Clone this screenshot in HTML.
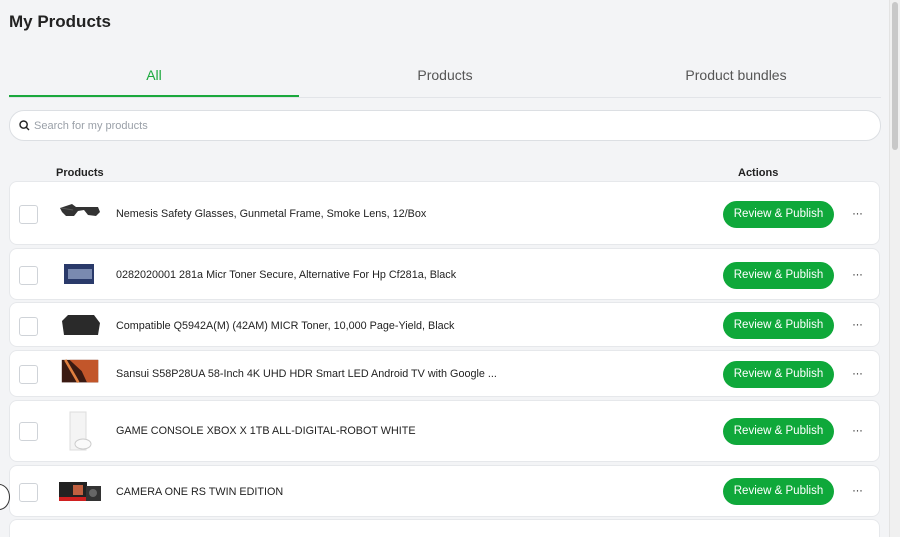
<!DOCTYPE html>
<html style="overflow:hidden;height:537px"><head><style>
body{margin:0;width:900px;height:537px;overflow:hidden;background:#f3f4f6;font-family:"Liberation Sans",sans-serif;color:#1f2430;position:relative}
h1{position:absolute;left:9px;top:12px;margin:0;font-size:17px;font-weight:bold;color:#222}
.tabs{position:absolute;left:9px;top:60px;width:872px;height:37px;border-bottom:1px solid #e2e4e8}
.tab{position:absolute;top:7px;width:290px;text-align:center;font-size:14px;color:#555}
.ul{position:absolute;left:0;top:35px;width:290px;height:2px;background:#1aa83c}
.search{position:absolute;left:9px;top:110px;width:870px;height:29px;border:1px solid #dcdfe3;border-radius:15px;background:#fff}
.search span{position:absolute;left:24px;top:9px;font-size:11px;color:#9aa0a8}
.hdr{position:absolute;top:167px;font-size:11px;font-weight:bold;color:#222}
.row{position:absolute;left:9px;width:871px;background:#fff;border:1px solid #e6e8eb;border-radius:8px;box-sizing:border-box}
.cb{position:absolute;left:9px;width:17px;height:17px;border:1px solid #cfd3d8;border-radius:3px;background:#fff}
.img{position:absolute;left:48px;width:44px;height:26px}
.t{position:absolute;left:106px;font-size:10.8px;color:#222;white-space:nowrap}
.btn{position:absolute;left:713px;width:111px;height:27px;border-radius:14px;background:#0fa83a;color:#fff;font-size:11.5px;text-align:center;line-height:27px}
.dots{position:absolute;left:842px;font-size:12px;color:#333;letter-spacing:-0.5px}
.sb{position:absolute;left:889px;top:0;width:11px;height:537px;background:#f0f0f0;border-left:1px solid #e3e3e3}
.sb div{position:absolute;left:2px;top:2px;width:6px;height:148px;background:#c8c8c8;border-radius:3px}
</style></head><body>
<h1>My Products</h1>
<div class="tabs">
<div class="tab" style="left:0;color:#1aa83c">All</div>
<div class="tab" style="left:291px">Products</div>
<div class="tab" style="left:582px">Product bundles</div>
<div class="ul"></div>
</div>
<div class="search">
<svg style="position:absolute;left:9px;top:9px" width="11" height="11" viewBox="0 0 11 11"><circle cx="4.6" cy="4.6" r="3.6" fill="none" stroke="#222" stroke-width="1.4"/><path d="M7.3 7.3L10 10" stroke="#222" stroke-width="1.4"/></svg>
<span>Search for my products</span></div>
<div class="hdr" style="left:56px">Products</div>
<div class="hdr" style="left:738px">Actions</div>

<div class="row" style="top:181px;height:64px"><div class="cb" style="top:23px"></div>
<svg class="img" style="top:20px" viewBox="0 0 44 26"><path d="M2 6L14 2L18 5L40 5L42 10L38 14L30 13L26 8L20 9L16 14L8 14L4 10Z" fill="#333"/><path d="M3 6L15 8" stroke="#555"/></svg>
<div class="t" style="top:26px">Nemesis Safety Glasses, Gunmetal Frame, Smoke Lens, 12/Box</div>
<div class="btn" style="top:19px">Review &amp; Publish</div><div class="dots" style="top:24px">···</div></div>

<div class="row" style="top:248px;height:52px"><div class="cb" style="top:17px"></div>
<svg class="img" style="top:12px" viewBox="0 0 44 26"><rect x="6" y="3" width="30" height="20" fill="#2a3a6a"/><rect x="10" y="8" width="24" height="10" fill="#7a8ab0"/></svg>
<div class="t" style="top:20px">0282020001 281a Micr Toner Secure, Alternative For Hp Cf281a, Black</div>
<div class="btn" style="top:13px">Review &amp; Publish</div><div class="dots" style="top:18px">···</div></div>

<div class="row" style="top:302px;height:45px"><div class="cb" style="top:14px"></div>
<svg class="img" style="top:10px" viewBox="0 0 44 26"><path d="M4 8L10 2L36 2L42 10L40 22L6 22Z" fill="#2a2a2a"/></svg>
<div class="t" style="top:17px">Compatible Q5942A(M) (42AM) MICR Toner, 10,000 Page-Yield, Black</div>
<div class="btn" style="top:9px">Review &amp; Publish</div><div class="dots" style="top:14px">···</div></div>

<div class="row" style="top:350px;height:47px"><div class="cb" style="top:14px"></div>
<svg class="img" style="top:8px" viewBox="0 0 44 30"><rect x="1" y="1" width="42" height="26" fill="#3a1a12"/><path d="M10 1L24 14L30 27L43 27L43 1Z" fill="#c2562a"/><path d="M5 1L16 20L20 27" stroke="#e08040" stroke-width="3" fill="none"/></svg>
<div class="t" style="top:17px">Sansui S58P28UA 58-Inch 4K UHD HDR Smart LED Android TV with Google ...</div>
<div class="btn" style="top:10px">Review &amp; Publish</div><div class="dots" style="top:15px">···</div></div>

<div class="row" style="top:400px;height:62px"><div class="cb" style="top:21px"></div>
<svg class="img" style="top:10px;height:40px" viewBox="0 0 44 40"><rect x="12" y="1" width="16" height="38" fill="#f4f4f4" stroke="#ddd"/><ellipse cx="25" cy="33" rx="8" ry="5" fill="#fafafa" stroke="#ccc"/></svg>
<div class="t" style="top:24px">GAME CONSOLE XBOX X 1TB ALL-DIGITAL-ROBOT WHITE</div>
<div class="btn" style="top:17px">Review &amp; Publish</div><div class="dots" style="top:22px">···</div></div>

<div class="row" style="top:465px;height:52px"><div class="cb" style="top:17px"></div>
<svg class="img" style="top:12px" viewBox="0 0 44 26"><rect x="1" y="4" width="28" height="19" fill="#222"/><rect x="1" y="19" width="28" height="4" fill="#d02020"/><rect x="28" y="8" width="15" height="15" fill="#333"/><circle cx="35" cy="15" r="4" fill="#666"/><rect x="15" y="7" width="10" height="10" fill="#c06040"/></svg>
<div class="t" style="top:20px">CAMERA ONE RS TWIN EDITION</div>
<div class="btn" style="top:12px">Review &amp; Publish</div><div class="dots" style="top:17px">···</div></div>

<div class="row" style="top:519px;height:18px;border-bottom:none;border-radius:8px 8px 0 0"></div>
<div style="position:absolute;left:-12px;top:484px;width:20px;height:24px;border:1px solid #333;border-radius:50%;background:#fff"></div>
<div class="sb"><div></div></div>
</body></html>
